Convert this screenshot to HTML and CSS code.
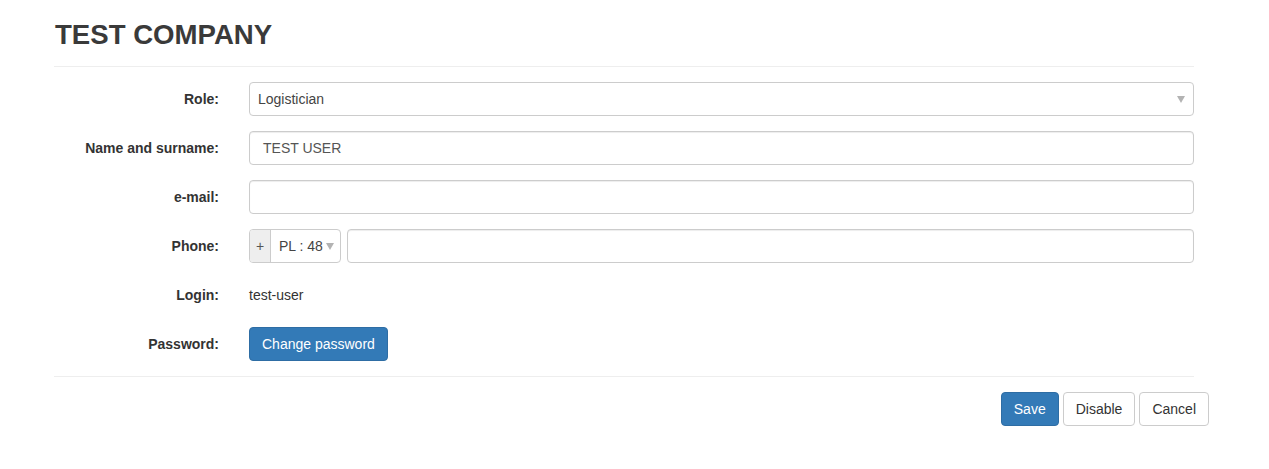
FILE: index.html
```html
<!DOCTYPE html>
<html>
<head>
<meta charset="utf-8">
<link rel="stylesheet" href="styles.css">
</head>
<body>
<div class="page">
  <h2 class="title">TEST COMPANY</h2>
  <hr class="sep">
  <form class="form">
    <div class="row">
      <label class="lbl">Role:</label>
      <div class="ctl">
        <div class="select">
          <span class="sel-text">Logistician</span>
          <svg class="caret" width="8" height="7" viewBox="0 0 8 7"><path d="M0 0H8L4 7Z" fill="#b3b3b3"/></svg>
        </div>
      </div>
    </div>
    <div class="row">
      <label class="lbl">Name and surname:</label>
      <div class="ctl"><div class="input">TEST USER</div></div>
    </div>
    <div class="row">
      <label class="lbl">e-mail:</label>
      <div class="ctl"><div class="input"></div></div>
    </div>
    <div class="row">
      <label class="lbl">Phone:</label>
      <div class="ctl phone">
        <div class="prefix">
          <span class="addon">+</span>
          <span class="cc">PL : 48<svg class="caret small" width="8" height="7" viewBox="0 0 8 7"><path d="M0 0H8L4 7Z" fill="#b3b3b3"/></svg></span>
        </div>
        <div class="input grow"></div>
      </div>
    </div>
    <div class="row">
      <label class="lbl">Login:</label>
      <div class="ctl"><p class="static">test-user</p></div>
    </div>
    <div class="row">
      <label class="lbl">Password:</label>
      <div class="ctl"><button type="button" class="btn primary">Change password</button></div>
    </div>
  </form>
  <hr class="sep">
  <div class="footer">
    <button type="button" class="btn primary">Save</button>
    <button type="button" class="btn">Disable</button>
    <button type="button" class="btn">Cancel</button>
  </div>
</div>
</body>
</html>
```
FILE: styles.css
```css
* { box-sizing: border-box; }
body {
  margin: 0;
  font-family: "Liberation Sans", Arial, sans-serif;
  font-size: 14px;
  line-height: 20px;
  color: #333;
  background: #fff;
}
.page {
  padding-left: 54px;
  width: 1209px;
}
.title {
  margin: 20px 0 16px 1px;
  font-size: 27.6px;
  line-height: 30px;
  font-weight: bold;
  color: #3a3a3a;
}
.sep {
  margin: 0;
  border: 0;
  border-top: 1px solid #eee;
  width: 1140px;
}
.form {
  width: 1140px;
  padding-top: 15px;
  padding-bottom: 15px;
  display: flex;
  flex-direction: column;
  gap: 15px;
}
.row {
  display: grid;
  grid-template-columns: 165px 945px;
  column-gap: 30px;
  align-items: center;
  min-height: 34px;
}
.lbl {
  text-align: right;
  font-weight: bold;
  color: #333;
}
.ctl { display: flex; }
.select, .input {
  height: 34px;
  border: 1px solid #ccc;
  border-radius: 4px;
  box-shadow: inset 0 1px 1px rgba(0,0,0,.075);
  color: #555;
  display: flex;
  align-items: center;
  width: 100%;
}
.select {
  padding: 0 8px 0 8px;
  justify-content: space-between;
  box-shadow: none;
}
.sel-text { color: #444; }
.input { padding: 0 12px 0 13px; }
.caret { display: block; }
.phone { gap: 6px; }
.prefix {
  display: flex;
  height: 34px;
  border: 1px solid #ccc;
  border-radius: 4px;
  overflow: hidden;
  flex: none;
}
.addon {
  width: 21px;
  background: #eee;
  border-right: 1px solid #ccc;
  display: flex;
  align-items: center;
  justify-content: center;
  color: #555;
}
.cc {
  width: 69px;
  display: flex;
  align-items: center;
  padding-left: 8px;
  color: #444;
}
.cc .caret { margin-left: 3px; }
.grow { flex: 1; width: auto; }
.static {
  margin: 0;
  padding: 7px 0;
  color: #333;
}
.btn {
  font-family: inherit;
  font-size: 14px;
  line-height: 20px;
  height: 34px;
  padding: 6px 12px;
  border: 1px solid #ccc;
  border-radius: 4px;
  background: #fff;
  color: #333;
}
.btn.primary {
  background: #337ab7;
  border-color: #2e6da4;
  color: #fff;
}
.footer {
  display: flex;
  justify-content: flex-end;
  gap: 4px;
  padding-top: 15px;
  width: 1155px;
}
```
